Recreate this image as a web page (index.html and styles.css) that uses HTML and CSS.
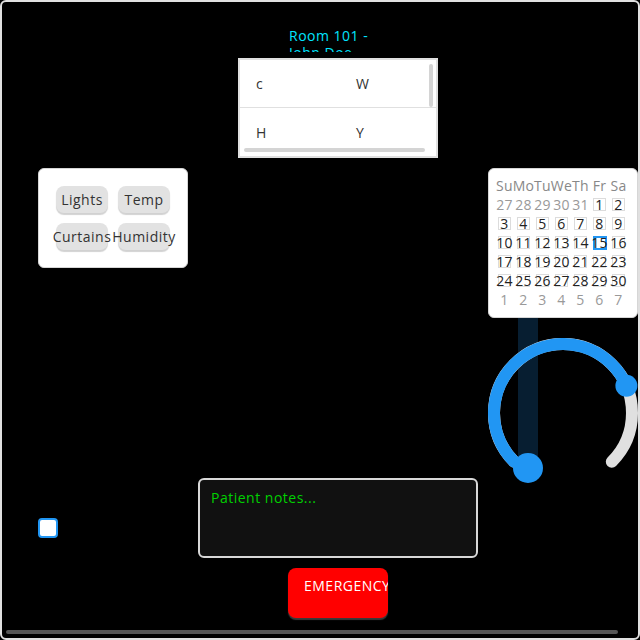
FILE: index.html
```html
<!DOCTYPE html>
<html>
<head>
<meta charset="utf-8">
<link rel="stylesheet" href="styles.css">
</head>
<body>
<div class="screen">
  <div class="title">Room 101 - John Doe</div>

  <div class="table">
    <div class="table-grid">
      <div class="cell top">c</div>
      <div class="cell top">W</div>
      <div class="cell">H</div>
      <div class="cell">Y</div>
    </div>
    <div class="sb-v"></div>
    <div class="sb-h"></div>
  </div>

  <div class="btnm">
    <div class="bm-btn">Lights</div>
    <div class="bm-btn">Temp</div>
    <div class="bm-btn">Curtains</div>
    <div class="bm-btn">Humidity</div>
  </div>

  <div class="slider-track"></div>

  <svg class="arc" width="150" height="150" viewBox="0 0 150 150">
    <path d="M 26.2 123.8 A 69 69 0 1 1 123.8 123.8" fill="none" stroke="#e0e0e0" stroke-width="12" stroke-linecap="round"/>
    <path d="M 26.2 123.8 A 69 69 0 1 1 138.4 47.8" fill="none" stroke="#2196f3" stroke-width="12" stroke-linecap="round"/>
    <circle cx="138.4" cy="47.8" r="11" fill="#2196f3"/>
  </svg>

  <div class="slider-knob"></div>

  <div class="calendar">
    <div class="cal-grid">
      <span class="hd">Su</span><span class="hd">Mo</span><span class="hd">Tu</span><span class="hd">We</span><span class="hd">Th</span><span class="hd">Fr</span><span class="hd">Sa</span>
      <span class="dc"><span class="o">27</span></span><span class="dc"><span class="o">28</span></span><span class="dc"><span class="o">29</span></span><span class="dc"><span class="o">30</span></span><span class="dc"><span class="o">31</span></span><span class="dc"><span class="d">1</span></span><span class="dc"><span class="d">2</span></span>
      <span class="dc"><span class="d">3</span></span><span class="dc"><span class="d">4</span></span><span class="dc"><span class="d">5</span></span><span class="dc"><span class="d">6</span></span><span class="dc"><span class="d">7</span></span><span class="dc"><span class="d">8</span></span><span class="dc"><span class="d">9</span></span>
      <span class="dc"><span class="d">10</span></span><span class="dc"><span class="d">11</span></span><span class="dc"><span class="d">12</span></span><span class="dc"><span class="d">13</span></span><span class="dc"><span class="d">14</span></span><span class="dc"><span class="d today">15</span></span><span class="dc"><span class="d">16</span></span>
      <span class="dc"><span class="d">17</span></span><span class="dc"><span class="d">18</span></span><span class="dc"><span class="d">19</span></span><span class="dc"><span class="d">20</span></span><span class="dc"><span class="d">21</span></span><span class="dc"><span class="d">22</span></span><span class="dc"><span class="d">23</span></span>
      <span class="dc"><span class="d">24</span></span><span class="dc"><span class="d">25</span></span><span class="dc"><span class="d">26</span></span><span class="dc"><span class="d">27</span></span><span class="dc"><span class="d">28</span></span><span class="dc"><span class="d">29</span></span><span class="dc"><span class="d">30</span></span>
      <span class="dc"><span class="o">1</span></span><span class="dc"><span class="o">2</span></span><span class="dc"><span class="o">3</span></span><span class="dc"><span class="o">4</span></span><span class="dc"><span class="o">5</span></span><span class="dc"><span class="o">6</span></span><span class="dc"><span class="o">7</span></span>
    </div>
  </div>

  <div class="textarea"><span class="placeholder">Patient notes...</span></div>

  <div class="checkbox"></div>

  <div class="emergency">EMERGENCY</div>

  <div class="screen-sb"></div>
</div>
</body>
</html>
```

FILE: styles.css
```css
html, body {
  margin: 0;
  padding: 0;
  background: #000;
}

.screen {
  position: relative;
  width: 640px;
  height: 640px;
  box-sizing: border-box;
  border: 2px solid #e0e0e0;
  border-radius: 6px;
  background: #000;
  overflow: hidden;
  font-family: "Open Sans", "Noto Sans", sans-serif;
  font-size: 14px;
  letter-spacing: 0.5px;
}

.title {
  position: absolute;
  left: 287px;
  top: 25px;
  width: 84px;
  height: 25px;
  overflow: hidden;
  color: #00e5ff;
  font-size: 14px;
  line-height: 17px;
}

/* table */
.table {
  position: absolute;
  left: 236px;
  top: 56px;
  width: 200px;
  height: 100px;
  box-sizing: border-box;
  border: 2px solid #e0e0e0;
  background: #fff;
  overflow: hidden;
}

.table-grid {
  display: grid;
  grid-template-columns: 100px 100px;
  grid-auto-rows: 48px;
  width: 200px;
}

.cell {
  display: flex;
  align-items: center;
  padding-left: 16px;
  box-sizing: border-box;
  color: #333;
  font-size: 14px;
}

.cell.top {
  border-bottom: 1px solid #e0e0e0;
}

.sb-v {
  position: absolute;
  left: 189px;
  top: 4px;
  width: 4px;
  height: 43px;
  border-radius: 2px;
  background: #d4d4d4;
}

.sb-h {
  position: absolute;
  left: 4px;
  top: 88px;
  width: 181px;
  height: 4px;
  border-radius: 2px;
  background: #d4d4d4;
}

/* button matrix */
.btnm {
  position: absolute;
  left: 36px;
  top: 166px;
  width: 150px;
  height: 100px;
  box-sizing: border-box;
  background: #fff;
  border: 1px solid #d6d6d6;
  border-radius: 6px;
  padding: 17px 17px;
  display: grid;
  grid-template-columns: 52px 52px;
  grid-auto-rows: 27px;
  column-gap: 10px;
  row-gap: 10px;
}

.bm-btn {
  display: flex;
  align-items: center;
  justify-content: center;
  background: #e2e2e2;
  border-radius: 8px;
  box-shadow: 0 2px 1px rgba(0, 0, 0, 0.18);
  color: #333;
  font-size: 14px;
  white-space: nowrap;
}

/* slider & arc */
.slider-track {
  position: absolute;
  left: 516px;
  top: 300px;
  width: 20px;
  height: 176px;
  border-radius: 10px;
  background: #071e31;
}

.arc {
  position: absolute;
  left: 486px;
  top: 336px;
}

.slider-knob {
  position: absolute;
  left: 511px;
  top: 451px;
  width: 30px;
  height: 30px;
  border-radius: 50%;
  background: #2196f3;
}

/* calendar */
.calendar {
  position: absolute;
  left: 486px;
  top: 166px;
  width: 150px;
  height: 150px;
  box-sizing: border-box;
  background: #fff;
  border: 1px solid #d6d6d6;
  border-radius: 6px;
  padding: 7px 0 0 6px;
}

.cal-grid {
  display: grid;
  grid-template-columns: repeat(7, 19px);
  grid-auto-rows: 19px;
  font-size: 14px;
  letter-spacing: 0.3px;
}

.hd {
  display: flex;
  align-items: center;
  justify-content: center;
  color: #888;
  white-space: nowrap;
}

.dc {
  display: flex;
  align-items: center;
  justify-content: center;
}

.dc .o,
.dc .d {
  display: flex;
  align-items: center;
  justify-content: center;
  width: 13px;
  height: 13px;
  box-sizing: border-box;
  white-space: nowrap;
}

.dc .o {
  color: #999;
}

.dc .d {
  border: 1px solid #dcdcdc;
  color: #222;
}

.dc .d.today {
  width: 14px;
  height: 14px;
  border: 2px solid #2196f3;
}

/* textarea */
.textarea {
  position: absolute;
  left: 196px;
  top: 476px;
  width: 280px;
  height: 80px;
  box-sizing: border-box;
  background: #111;
  border: 2px solid #d8d8d8;
  border-radius: 6px;
  padding: 9px 11px;
  line-height: 17px;
}

.placeholder {
  color: #00d000;
  font-size: 14px;
}

.checkbox {
  position: absolute;
  left: 36px;
  top: 516px;
  width: 20px;
  height: 20px;
  box-sizing: border-box;
  border: 2px solid #2196f3;
  border-radius: 4px;
  background: #fff;
}

.emergency {
  position: absolute;
  left: 286px;
  top: 566px;
  width: 100px;
  height: 50px;
  box-sizing: border-box;
  background: #ff0000;
  border-radius: 8px;
  box-shadow: 0 2px 1px #3a3a3a;
  overflow: hidden;
  color: #fff;
  font-size: 14px;
  line-height: 17px;
  padding: 9px 0 0 16px;
  white-space: nowrap;
}

.screen-sb {
  position: absolute;
  left: 4px;
  top: 628px;
  width: 612px;
  height: 4px;
  border-radius: 2px;
  background: #555;
}
```
